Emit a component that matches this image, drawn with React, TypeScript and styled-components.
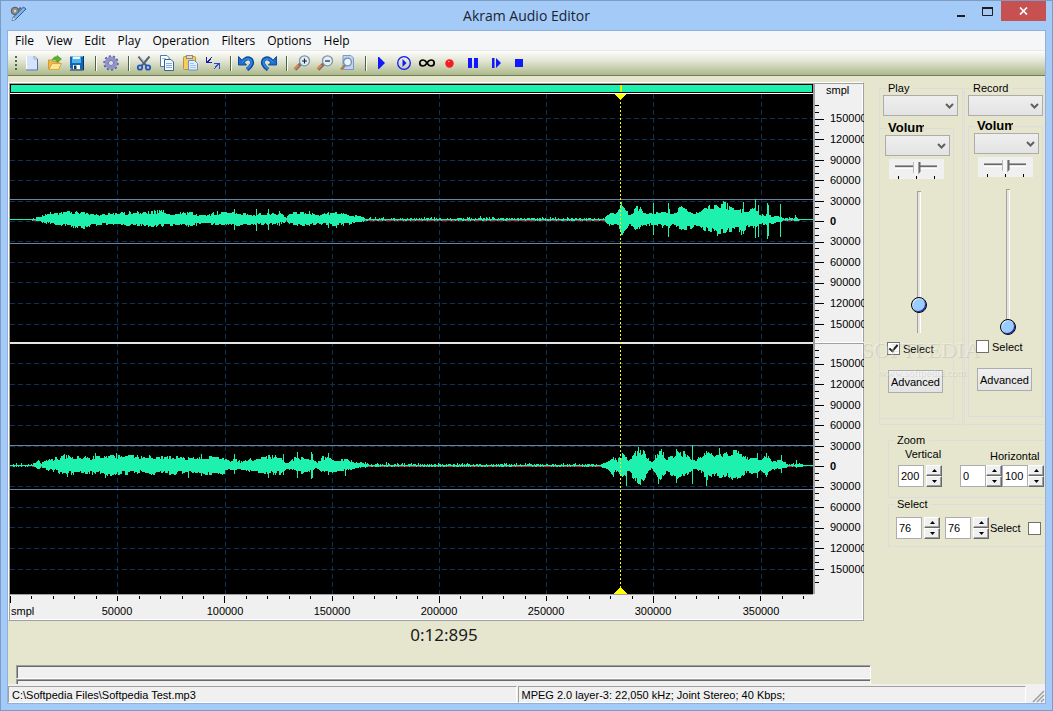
import React from "react";
import styled, { createGlobalStyle, css } from "styled-components";

const GlobalStyle = createGlobalStyle`
  *, *::before, *::after { box-sizing: border-box; }
  body { margin: 0; background: #a4cbf8; }
  button, input, select { font: inherit; color: inherit; }
`;

const c = {
  frame: "#a4cbf8",
  body: "#e6e6cf",
  face: "#f0f0f0",
  grey: "#a0a0a0",
  dark: "#696969",
  wave: "#1ef0ae",
  line: "#dcdcdc",
};

/* ---------- window chrome ---------- */

const Window = styled.div`
  min-height: 100vh;
  display: flex;
  flex-direction: column;
  padding: 0 6px 6px;
  border: 1px solid #7d9cc4;
  background: ${c.frame};
  color: #000;
  font: 11px/12px "Liberation Sans", Arial, sans-serif;
`;

const TitleBar = styled.header`
  display: grid;
  grid-template-columns: 108px 1fr 108px;
  height: 29px;
  align-items: center;
`;

const AppIcon = styled.span`
  display: flex;
  padding: 0 0 4px 3px;
`;

const Title = styled.h1`
  margin: 0;
  text-align: center;
  font: 14px/28px "Open Sans", "Noto Sans", sans-serif;
  color: #1c2430;
`;

const WindowButtons = styled.div`
  display: flex;
  align-self: start;
  justify-content: flex-end;
`;

const WindowButton = styled.button<{ $close?: boolean }>`
  display: flex;
  align-items: center;
  justify-content: center;
  width: ${(p) => (p.$close ? 45 : 27)}px;
  height: 20px;
  padding: 0;
  border: 0;
  background: ${(p) => (p.$close ? "#c75050" : "transparent")};
`;

const Client = styled.div`
  flex: 1;
  display: flex;
  flex-direction: column;
  border: 1px solid #8fb1da;
  background: ${c.body};
`;

const MenuBar = styled.nav`
  display: flex;
  gap: 12px;
  height: 20px;
  padding-left: 7px;
  border-bottom: 1px solid #e8e8ea;
  background: #f5f6f8;
  font: 12px/19px "Open Sans", "Noto Sans", sans-serif;
`;

const MenuItem = styled.button`
  padding: 0;
  border: 0;
  background: none;
`;

const ToolBar = styled.div`
  display: flex;
  align-items: center;
  height: 25px;
  padding-left: 5px;
  border-bottom: 1px solid #6c8058;
  background: linear-gradient(#fdfdfb, #e3e6d5 40%, #adb98a);
`;

const Grip = styled.span`
  width: 7px;
  height: 15px;
  background: repeating-linear-gradient(#4d6b46 0 2px, transparent 2px 4px) 2px 0 / 2px 100% no-repeat;
`;

const ToolButton = styled.button`
  display: flex;
  align-items: center;
  justify-content: center;
  width: 23px;
  height: 22px;
  padding: 0;
  border: 0;
  background: none;
`;

const ToolSeparator = styled.span`
  width: 2px;
  height: 15px;
  margin: 0 2px 0 6px;
  border-left: 1px solid #4a6741;
  border-right: 1px solid #fff;
`;

/* ---------- wave view ---------- */

const Main = styled.main`
  flex: 1;
  display: grid;
  grid-template-columns: minmax(0, 1fr) 181px;
  padding-top: 6px;
`;

const WaveFrame = styled.section`
  display: grid;
  grid-template-columns: minmax(0, 1fr) 49px;
  grid-template-rows: 10px minmax(500px, 1fr) 25px;
  padding: 1px;
  border: 1px solid;
  border-color: #fff ${c.grey} ${c.grey} #fff;
  background: ${c.face};
  box-shadow: inset 1px 1px ${c.grey}, inset -1px -1px #fff;
`;

const Overview = styled.div`
  display: flex;
  margin-bottom: 1px;
  border: 1px solid #000;
  background: ${c.wave};
  box-shadow: 0 1px #fff;
`;

const RulerHead = styled.span`
  padding-left: 11px;
  border-left: 2px solid ${c.grey};
`;

const FillDrawing = styled.svg`
  position: absolute;
  inset: 0;
  width: 100%;
  height: 100%;
`;

const PlotCell = styled.div`
  position: relative;
  background: #000;
`;

const SideRuler = styled.div`
  position: relative;
  overflow: hidden;
  margin-right: -2px;
  border-left: 2px solid ${c.grey};
`;

const BottomRuler = styled.div`
  position: relative;
  border-top: 1px solid ${c.grey};
`;

const Clock = styled.output`
  display: block;
  height: 44px;
  margin-right: 165px;
  text-align: center;
  font: 17px/28px "Noto Sans", "Open Sans", sans-serif;
  color: #1a1a1a;
`;

const Gauges = styled.div`
  height: 19px;
  overflow: hidden;
  display: flex;
  flex-direction: column;
  padding: 0 174px 0 8px;
`;

const Gauge = styled.progress`
  appearance: none;
  flex: none;
  display: block;
  width: 100%;
  height: 14px;
  border: 1px solid;
  border-color: ${c.grey} #fff #fff ${c.grey};
  box-shadow: inset 1px 1px ${c.dark};
  background: ${c.face};
  &::-webkit-progress-bar { background: transparent; }
`;

const StatusBar = styled.footer`
  display: grid;
  grid-template-columns: 1fr 1fr 18px;
  column-gap: 1px;
  height: 19px;
  padding-top: 2px;
  background: ${c.face};
`;

const StatusPanel = styled.div`
  padding: 2px 3px 0;
  white-space: nowrap;
  overflow: hidden;
  border: 1px solid;
  border-color: ${c.grey} #fff #fff ${c.grey};
`;

const SizeGrip = styled.svg`
  align-self: end;
  justify-self: end;
`;

/* ---------- side panel ---------- */

const Side = styled.aside`
  position: relative;
  overflow: hidden;
  padding-left: 15px;
`;

const Mixers = styled.div`
  display: flex;
  gap: 1px;
  width: 180px;
`;

const Group = styled.fieldset`
  min-width: 0;
  margin: 0;
  padding: 0;
  border: 1px solid ${c.line};
`;

const Legend = styled.legend<{ $flush?: boolean }>`
  margin-left: ${(p) => (p.$flush ? 3 : 6)}px;
  padding: 0 4px 0 2px;
`;

const DeviceGroup = styled(Group)<{ $wide?: boolean }>`
  width: ${(p) => (p.$wide ? 95 : 84)}px;
  flex: none;
  padding: 1px 0 5px 3px;
`;

const VolumeGroup = styled(Group)<{ $inset?: boolean }>`
  width: 75px;
  margin: ${(p) => (p.$inset ? "3px 0 0 0" : "5px 0 0 -4px")};
  padding-bottom: 25px;
`;

const VolumeLegend = styled.legend`
  width: 38px;
  margin-left: 6px;
  padding-left: 2px;
  overflow: hidden;
  font: bold 13px/14px "Liberation Sans", Arial, sans-serif;
`;

const ComboBox = styled.div<{ $small?: boolean }>`
  position: relative;
  width: ${(p) => (p.$small ? 65 : 75)}px;
  height: 21px;
  margin-left: ${(p) => (p.$small ? 5 : 0)}px;
`;

const Combo = styled.select`
  appearance: none;
  display: block;
  width: 100%;
  height: 100%;
  border: 1px solid #acacac;
  border-radius: 0;
  background: linear-gradient(#efefef, #e3e3e3);
`;

const ComboArrow = styled.svg`
  position: absolute;
  right: 4px;
  top: 8px;
  pointer-events: none;
`;

const Balance = styled.input`
  appearance: none;
  display: block;
  width: 55px;
  height: 20px;
  margin: 3px 0 0 9px;
  background:
    linear-gradient(#000, #000) 9px 17px / 1px 3px no-repeat,
    linear-gradient(#000, #000) 27px 17px / 1px 3px no-repeat,
    linear-gradient(#000, #000) 45px 17px / 1px 3px no-repeat,
    linear-gradient(#a0a0a0 0 1px, #696969 1px 2px, #e3e3e3 2px 3px, #fff 3px) 6px 6px / 42px 4px no-repeat,
    ${c.face};
  &::-webkit-slider-thumb {
    appearance: none;
    width: 8px;
    height: 14px;
    background: linear-gradient(90deg, #b8b8b8 0 1px, #f6f6f6 1px 5px, #a0a0a0 5px 6px, #696969 6px);
    clip-path: polygon(0 0, 100% 0, 100% 70%, 50% 100%, 0 70%);
  }
`;

const Volume = styled.input`
  appearance: none;
  display: block;
  writing-mode: vertical-lr;
  direction: rtl;
  width: 16px;
  height: 150px;
  margin: 8px 0 0 31px;
  background:
    linear-gradient(#a0a0a0, #a0a0a0) 6px 4px / 4px 1px no-repeat,
    linear-gradient(90deg, #a0a0a0 0 1px, #e6e6e0 1px 3px, #fff 3px) 6px 4px / 4px 142px no-repeat;
  &::-webkit-slider-thumb {
    appearance: none;
    width: 16px;
    height: 16px;
    border: 1px solid #000;
    border-radius: 50%;
    background: #99ccff;
    box-shadow: inset -1px -1px #2222a0, inset 1px 1px #cfe6ff;
  }
`;

const CheckLabel = styled.label<{ $reverse?: boolean }>`
  display: flex;
  flex-direction: ${(p) => (p.$reverse ? "row-reverse" : "row")};
  align-items: center;
  gap: ${(p) => (p.$reverse ? 7 : 3)}px;
`;

const Check = styled.input`
  appearance: none;
  position: relative;
  width: 13px;
  height: 13px;
  margin: 0;
  border: 1px solid #707070;
  background: #fff;
  &:checked::after {
    content: "";
    position: absolute;
    left: 3px;
    top: 0;
    width: 5px;
    height: 9px;
    border: solid #1f1f1f;
    border-width: 0 2px 2px 0;
    transform: rotate(40deg);
  }
`;

const CheckRow = styled.div`
  margin: 5px 0 0 7px;
`;

const PushButton = styled.button`
  display: block;
  width: 55px;
  height: 23px;
  margin: 15px 0 0 8px;
  padding: 0;
  border: 1px solid #acacac;
  background: linear-gradient(#f0f0f0, #e4e4e4);
  white-space: nowrap;
`;

const RangeGroup = styled(Group)<{ $first?: boolean }>`
  display: block;
  width: 170px;
  margin: ${(p) => (p.$first ? 9 : 0)}px 0 0 9px;
  padding-bottom: ${(p) => (p.$first ? 10 : 7)}px;
`;

const FieldRow = styled.div<{ $top?: boolean }>`
  display: flex;
  padding: ${(p) => (p.$top ? "7px 0 0 7px" : "0 0 0 9px")};
`;

const Field = styled.div<{ $gap: number }>`
  margin-right: ${(p) => p.$gap}px;
`;

const FieldLabel = styled.label<{ $indent: number; $low?: boolean }>`
  display: block;
  height: 19px;
  padding: ${(p) => (p.$low ? 4 : 2)}px 0 0 ${(p) => p.$indent}px;
`;

const NumberRow = styled.div<{ $tight?: boolean }>`
  display: flex;
  gap: ${(p) => (p.$tight ? 0 : 2)}px;
`;

const NumberInput = styled.input`
  width: 26px;
  height: 22px;
  padding: 0 2px;
  border: 1px solid #abadb3;
  border-radius: 0;
  background: #fff;
`;

const Spinner = styled.span`
  display: flex;
  flex-direction: column;
  width: 16px;
  height: 22px;
`;

const SpinButton = styled.button`
  display: flex;
  align-items: center;
  justify-content: center;
  width: 16px;
  height: 11px;
  padding: 0;
  border: 1px solid;
  border-color: #fff ${c.dark} ${c.dark} #fff;
  background: ${c.face};
  box-shadow: inset -1px -1px ${c.grey};
`;

const Watermark = styled.div<{ $small?: boolean }>`
  position: absolute;
  pointer-events: none;
  white-space: nowrap;
  ${(p) =>
    p.$small
      ? css`
          left: 14px;
          top: 283px;
          font: 11px/14px "Liberation Serif", serif;
        `
      : css`
          left: -3px;
          top: 256px;
          font: 22px/24px "Liberation Serif", serif;
        `}
  color: rgba(255, 255, 255, 0.3);
  text-shadow: 1px 1px rgba(120, 120, 110, 0.2);
`;

/* ---------- waveform ---------- */

type Point = [x: number, up: number, down: number];

const PLOT_W = 803;
const PLOT_H = 500;

const upperEnvelope: Point[] = [
  [0, 0, 0], [21, 0, 0], [25, 1, 1], [30, 2, 1], [34, 4, 3], [42, 6, 3], [50, 6, 5], [56, 7, 5], [62, 6, 6], [67, 7, 6],
  [75, 6, 7], [82, 6, 5], [88, 4, 4], [100, 5, 4], [112, 6, 4], [124, 6, 5], [136, 6, 5], [148, 7, 6], [158, 6, 5],
  [168, 5, 4], [178, 6, 5], [188, 4, 4], [194, 4, 3], [202, 5, 4], [212, 6, 4], [220, 6, 5], [230, 5, 4], [240, 4, 4],
  [252, 5, 4], [262, 5, 4], [272, 5, 3], [276, 1, 1], [280, 6, 4], [292, 6, 5], [300, 6, 5], [306, 3, 3], [314, 6, 4],
  [324, 6, 5], [334, 5, 4], [340, 3, 3], [348, 3, 2], [355, 1, 1], [594, 1, 1], [598, 5, 5], [605, 5, 5], [608, 8, 6],
  [611, 17, 15], [615, 11, 10], [619, 4, 4], [625, 10, 8], [631, 9, 6], [638, 5, 4], [647, 6, 5], [653, 6, 6], [662, 5, 4],
  [671, 10, 8], [679, 7, 9], [683, 6, 5], [688, 7, 5], [695, 10, 9], [701, 11, 9], [707, 12, 13], [713, 14, 10],
  [720, 11, 10], [726, 8, 8], [733, 9, 9], [738, 7, 6], [745, 9, 8], [749, 4, 3], [757, 4, 4], [761, 3, 3], [770, 2, 2],
  [773, 1, 1], [783, 1, 1], [785, 2, 1], [790, 0, 0], [803, 0, 0],
];

const upperSpikes: Point[] = [
  [67, 7, 8], [144, 9, 6], [178, 6, 7], [207, 8, 5], [224, 10, 10], [246, 10, 11], [258, 10, 10], [269, 8, 6], [299, 8, 6],
  [318, 7, 8], [326, 7, 8], [339, 3, 5], [373, 2, 0], [424, 2, 1], [470, 3, 0], [540, 2, 1], [610, 14, 11], [611, 17, 15],
  [643, 16, 15], [658, 16, 17], [659, 10, 8], [717, 16, 10], [731, 6, 15], [733, 17, 14], [745, 20, 18], [748, 14, 17],
  [757, 16, 19], [758, 14, 16], [770, 15, 17], [785, 4, 1],
];

const lowerEnvelope: Point[] = [
  [0, 0, 0], [22, 1, 0], [25, 2, 1], [28, 4, 3], [31, 1, 1], [34, 4, 3], [42, 6, 4], [50, 7, 6], [56, 8, 7], [64, 7, 7],
  [72, 7, 6], [80, 6, 6], [86, 8, 8], [92, 7, 6], [98, 8, 8], [106, 8, 7], [118, 8, 7], [130, 8, 6], [142, 8, 7],
  [154, 7, 6], [166, 8, 7], [176, 6, 5], [186, 7, 7], [194, 7, 7], [202, 7, 7], [212, 7, 7], [220, 4, 3], [226, 5, 4],
  [230, 3, 3], [238, 5, 5], [246, 6, 5], [254, 8, 6], [262, 8, 7], [270, 7, 7], [276, 2, 2], [284, 6, 4], [290, 7, 6],
  [296, 6, 5], [302, 6, 4], [306, 2, 2], [312, 7, 5], [320, 6, 6], [328, 5, 4], [336, 5, 4], [345, 3, 2], [352, 2, 1],
  [358, 1, 1], [590, 1, 1], [596, 3, 2], [603, 7, 8], [607, 4, 4], [612, 10, 9], [618, 6, 6], [625, 11, 12],
  [630, 14, 15], [635, 10, 9], [641, 2, 2], [645, 8, 8], [651, 13, 12], [656, 6, 5], [661, 8, 8], [667, 12, 10],
  [675, 11, 9], [681, 6, 4], [686, 5, 4], [692, 8, 6], [697, 12, 11], [703, 8, 9], [710, 12, 10], [716, 10, 8],
  [723, 12, 12], [731, 12, 9], [737, 6, 5], [747, 7, 7], [751, 5, 4], [756, 9, 8], [762, 3, 3], [771, 4, 3], [777, 1, 1],
  [784, 1, 1], [787, 2, 1], [795, 0, 0], [803, 0, 0],
];

const lowerSpikes: Point[] = [
  [54, 11, 7], [57, 7, 11], [85, 12, 8], [95, 8, 12], [106, 12, 8], [139, 10, 8], [178, 8, 12], [191, 11, 10],
  [224, 11, 8], [258, 10, 12], [273, 11, 9], [287, 13, 12], [301, 13, 13], [302, 11, 12], [318, 12, 9], [335, 6, 10],
  [355, 3, 2], [376, 3, 1], [428, 2, 1], [616, 8, 20], [628, 18, 18], [630, 15, 19], [648, 10, 18], [651, 16, 13],
  [666, 16, 17], [682, 20, 18], [696, 14, 20], [709, 17, 12], [727, 12, 13], [747, 12, 12], [756, 12, 11],
  [771, 10, 7], [786, 5, 2],
];

/* One vertical stroke per column: the envelope gives the level, a seeded generator the roughness. */
function tracePath(envelope: Point[], spikes: Point[], center: number, seed: number): string {
  let state = seed;
  const random = () => {
    state = (state * 16807) % 2147483647;
    return state / 2147483647;
  };
  const spikeAt = new Map(spikes.map((s) => [s[0], s]));
  let segment = 0;
  let roughUp = 1;
  let roughDown = 1;
  let d = "";
  for (let x = 0; x < PLOT_W; x++) {
    while (segment < envelope.length - 2 && envelope[segment + 1][0] <= x) segment++;
    const [x0, u0, d0] = envelope[segment];
    const [x1, u1, d1] = envelope[segment + 1];
    const t = (x - x0) / (x1 - x0);
    const spike = spikeAt.get(x);
    const level = u0 + (u1 - u0) * t;
    if (random() > 0.35) {
      roughUp = 0.72 + random() * 0.6;
      roughDown = 0.72 + random() * 0.65;
    }
    let up = level * roughUp;
    let down = (d0 + (d1 - d0) * t) * roughDown;
    if (level > 0 && level <= 1) {
      up = random() > 0.94 ? 2 : random() > 0.6 ? 1 : 0;
      down = random() > 0.7 ? 1 : 0;
    }
    if (spike) {
      up = spike[1];
      down = spike[2];
    }
    d += `M${x + 0.5} ${center - Math.round(up)}V${center + 1 + Math.round(down)}`;
  }
  return d;
}

const channels = [
  { center: 126, zero: 127, top: 105, bottom: 149, trace: tracePath(upperEnvelope, upperSpikes, 125, 7321) },
  { center: 372, zero: 372, top: 351, bottom: 395, trace: tracePath(lowerEnvelope, lowerSpikes, 371, 40923) },
];

const steps = [-103, -82, -61, -41, -20, 0, 20, 41, 61, 82, 103];
const stepLabels = [150000, 120000, 90000, 60000, 30000, 0, 30000, 60000, 90000, 120000, 150000];
const gridX = [107, 215, 322, 429, 536, 643, 751];

function Plot() {
  return (
    <PlotCell>
      <FillDrawing viewBox={`0 0 ${PLOT_W} ${PLOT_H}`} preserveAspectRatio="none" shapeRendering="crispEdges" fill="none">
        <g stroke="#0a3055" strokeDasharray="5 3">
          {channels.map((ch) =>
            steps.map((s) => <path key={`${ch.center}${s}`} d={`M0 ${ch.zero + s + 0.5}H${PLOT_W}`} />)
          )}
          {gridX.map((x) => (
            <path key={x} d={`M${x + 0.5} 0V${PLOT_H}`} />
          ))}
        </g>
        {channels.map((ch) => (
          <g key={ch.center}>
            <path stroke="#6f8296" d={`M0 ${ch.top + 0.5}H${PLOT_W}M0 ${ch.bottom + 0.5}H${PLOT_W}`} />
            <path stroke="#c03038" d={`M22 ${ch.center + 0.5}H790`} />
            <path stroke={c.wave} d={ch.trace} />
          </g>
        ))}
        <path stroke="#e9e4e4" strokeWidth="2" d={`M0 249H${PLOT_W}`} />
        <path stroke="#ffff00" strokeDasharray="2 2" d={`M610.500 0V${PLOT_H}`} />
        <path fill="#ffff00" d="M604 0H617L610.500 6ZM604 500H617L610.500 493Z" />
      </FillDrawing>
    </PlotCell>
  );
}

const pctY = (y: number) => `${(y / PLOT_H) * 100}%`;
const pctX = (x: number) => `${(x / PLOT_W) * 100}%`;

function LevelRuler() {
  return (
    <SideRuler>
      <FillDrawing shapeRendering="crispEdges">
        {channels.map((ch) => (
          <g key={ch.zero}>
            {Array.from({ length: 35 }, (_, i) => i - 17).map((n) => {
              const y = pctY(ch.zero + Math.round((n * 41) / 6) + 0.5);
              return <line key={n} x1="0" x2={n % 3 === 0 ? 9 : 4} y1={y} y2={y} stroke="#000" />;
            })}
            {steps.map((s, i) => (
              <text key={s} x="15" y={pctY(ch.zero + s)} dy="4" fontWeight={s === 0 ? 700 : 400}>
                {stepLabels[i]}
              </text>
            ))}
          </g>
        ))}
        <line x1="0" x2="100%" y1={pctY(248.5)} y2={pctY(248.5)} stroke="#fff" />
        <line x1="0" x2="100%" y1={pctY(249.5)} y2={pctY(249.5)} stroke={c.grey} />
      </FillDrawing>
    </SideRuler>
  );
}

function TimeRuler() {
  return (
    <BottomRuler>
      <FillDrawing shapeRendering="crispEdges">
        {Array.from({ length: 38 }, (_, n) => {
          const x = pctX(Math.round(n * 10.72 * 2) + 0.5);
          const length = n % 10 === 0 ? 7 : n % 5 === 0 ? 5 : 3;
          return <line key={n} x1={x} x2={x} y1="1" y2={1 + length} stroke="#000" />;
        })}
        <text x="1" y="20">smpl</text>
        {gridX.map((x, i) => (
          <text key={x} x={pctX(x)} y="20" textAnchor="middle">
            {(i + 1) * 50000}
          </text>
        ))}
      </FillDrawing>
    </BottomRuler>
  );
}

/* ---------- toolbar icons ---------- */

const Icon = ({ children }: { children: React.ReactNode }) => (
  <svg width="18" height="16" viewBox="0 0 18 16" fill="none" aria-hidden="true">
    {children}
  </svg>
);

const magnifier = (
  <>
    <path d="M2 14.500L8 8.500" stroke="#7e6a70" strokeWidth="3.500" />
    <path d="M1.500 14L5.500 10" stroke="#e08a3c" strokeWidth="2.200" />
    <circle cx="11.500" cy="5.800" r="5" fill="#dff0fb" stroke="#8193a8" strokeWidth="1.300" />
  </>
);

const icons: Record<string, React.ReactNode> = {
  New: (
    <>
      <path d="M3 1H11L14 4V15.500H3Z" fill="#d5e4fb" />
      <path d="M3.500 1V15" stroke="#fff" />
      <path d="M3 15H14.500V4L11 1" stroke="#4f6fa4" />
      <path d="M11 1V4H14" fill="#fff" stroke="#8aa6d0" />
    </>
  ),
  Open: (
    <>
      <path d="M2.500 5H6L7 6.500H13V14H2.500Z" fill="#e8bc52" stroke="#cf9a34" />
      <path d="M3 14.500L6 8.500H15.500L12.500 14.500Z" fill="#ffe690" stroke="#d8a540" />
      <path d="M6.500 4Q8.500 1 11 2V0.500L15.500 4L11 7.500V5.500Q8.500 4.500 6.500 5Z" fill="#5cb32c" stroke="#3f8f22" strokeWidth=".6" />
    </>
  ),
  Save: (
    <>
      <path d="M1 1.500H14V14.500H3L1 12.500Z" fill="#1565b0" />
      <path d="M3 1.500H12V8H3Z" fill="#49b6f0" />
      <path d="M4 1.500H11V4H4Z" fill="#e8f6ff" />
      <path d="M4 10H11V14.500H4Z" fill="#fff" />
      <path d="M5 10.500H7.500V14H5Z" fill="#12365c" />
      <path d="M14.500 1V15M1 15H14.500" stroke="#0a3260" />
    </>
  ),
  Settings: (
    <>
      <circle cx="9" cy="8" r="6.600" stroke="#5a5a9c" strokeWidth="2.200" strokeDasharray="2.100 2" />
      <circle cx="9" cy="8" r="4.600" fill="#d6d8ee" stroke="#8f92cc" strokeWidth="3.600" />
      <circle cx="9" cy="8" r="2.600" fill="#dde0d4" stroke="#5c5ea0" strokeWidth=".8" />
    </>
  ),
  Cut: (
    <>
      <path d="M3.500 1.500L11.500 11M14.500 1.500L6.500 11" stroke="#53627a" strokeWidth="2" />
      <path d="M4.500 1.500L9 7" stroke="#c9d2de" strokeWidth=".8" />
      <circle cx="5" cy="12.500" r="2.200" stroke="#2456c0" strokeWidth="1.800" />
      <circle cx="13" cy="12.500" r="2.200" stroke="#2456c0" strokeWidth="1.800" />
    </>
  ),
  Copy: (
    <>
      <path d="M2.500 .500H9L11 2.500V11.500H2.500Z" fill="#fff" stroke="#4a7ab4" />
      <path d="M6.500 4.500H13L15.500 7V15.500H6.500Z" fill="#f2f8ff" stroke="#3a6498" />
      <path d="M8 8.500H14M8 10.500H14M8 12.500H14" stroke="#86aede" />
      <path d="M4 3.500H8" stroke="#9cbce4" />
    </>
  ),
  Paste: (
    <>
      <rect x="2.500" y="1.500" width="12" height="13" rx="1" fill="#f2cf62" stroke="#c09430" />
      <rect x="5.500" y=".500" width="6" height="3" fill="#dcdce0" stroke="#8a8a90" />
      <path d="M7.500 5.500H13.500L16.500 8.500V15H7.500Z" fill="#e2eefb" stroke="#6a8fc0" />
      <path d="M9 8.500H13M9 10.500H15M9 12.500H15" stroke="#a6c2e6" />
    </>
  ),
  Fit: (
    <g shapeRendering="crispEdges">
      <path d="M2 2H3V8H2ZM2 7H8V8H2ZM3 6H4V7H3ZM4 5H5V6H4ZM5 4H6V5H5ZM6 3H7V4H6ZM7 2H8V3H7ZM4 6H5V7H4ZM5 5H6V6H5ZM6 4H7V5H6Z" fill="#1c1cae" />
      <path d="M15 8H16V14H15ZM10 8H16V9H10ZM14 9H15V10H14ZM13 10H14V11H13ZM12 11H13V12H12ZM11 12H12V13H11ZM10 13H11V14H10ZM13 9H14V10H13ZM12 10H13V11H12ZM11 11H12V12H11Z" fill="#2c48d8" />
    </g>
  ),
  Undo: (
    <>
      <path d="M5 7.500Q10 1 14 4.500Q17.500 9 10 14.500" stroke="#114a9c" strokeWidth="4" />
      <path d="M1.500 1.500V10H9.500Z" fill="#1d6fd0" stroke="#114a9c" />
      <path d="M5 7.500Q10 1.500 13.800 5Q16.500 9 10 14" stroke="#2b86e4" strokeWidth="2" />
    </>
  ),
  Redo: (
    <>
      <path d="M13 7.500Q8 1 4 4.500Q.500 9 8 14.500" stroke="#114a9c" strokeWidth="4" />
      <path d="M16.500 1.500V10H8.500Z" fill="#1d6fd0" stroke="#114a9c" />
      <path d="M13 7.500Q8 1.500 4.200 5Q1.500 9 8 14" stroke="#2b86e4" strokeWidth="2" />
    </>
  ),
  "Zoom in": (
    <>
      {magnifier}
      <path d="M9 6H14M11.500 3.500V8.500" stroke="#222" strokeWidth="1.200" />
    </>
  ),
  "Zoom out": (
    <>
      {magnifier}
      <path d="M9 6H14" stroke="#222" strokeWidth="1.200" />
    </>
  ),
  "Zoom page": (
    <>
      <path d="M4 .500H12L14.500 3V14.500H4Z" fill="#c3d2f0" stroke="#7d96c8" />
      <path d="M2 14.500L6 10.500" stroke="#b07848" strokeWidth="2.400" />
      <circle cx="8.500" cy="7" r="3.900" fill="#eaf6ff" stroke="#6f8ab0" strokeWidth="1.300" />
    </>
  ),
  Play: <path d="M6 2H7L13 8L7 14H6Z" fill="#1018ff" />,
  "Play selection": (
    <>
      <circle cx="9" cy="8" r="6.300" stroke="#1018ff" strokeWidth="1.300" />
      <path d="M7.500 4L11.500 8L7.500 12Z" fill="#1018ff" />
    </>
  ),
  Loop: (
    <path
      d="M9 8C7.500 5.500 6.500 5 5 5C3 5 1.800 6.300 1.800 8S3 11 5 11C6.500 11 7.500 10.500 9 8C10.500 5.500 11.500 5 13 5C15 5 16.200 6.300 16.200 8S15 11 13 11C11.500 11 10.500 10.500 9 8Z"
      stroke="#000"
      strokeWidth="1.700"
    />
  ),
  Record: (
    <>
      <circle cx="8.500" cy="8.500" r="4.200" fill="#f41c1c" />
      <path d="M7 6.500H8.500" stroke="#ffb0b0" />
    </>
  ),
  Pause: <path d="M4 3H8V13H4ZM10 3H14V13H10Z" fill="#1018ff" />,
  Step: (
    <>
      <path d="M5 3H7.500V13H5Z" fill="#1018ff" />
      <path d="M9 3L14 8L9 13Z" fill="#1018ff" />
    </>
  ),
  Stop: <path d="M5 4H13V12H5Z" fill="#1018ff" />,
};

const toolGroups = [
  ["New", "Open", "Save"],
  ["Settings"],
  ["Cut", "Copy", "Paste", "Fit"],
  ["Undo", "Redo"],
  ["Zoom in", "Zoom out", "Zoom page"],
  ["Play", "Play selection", "Loop", "Record", "Pause", "Step", "Stop"],
];

/* ---------- side controls ---------- */

function Select({ label, small }: { label: string; small?: boolean }) {
  return (
    <ComboBox $small={small}>
      <Combo aria-label={label} defaultValue="">
        <option value="" />
      </Combo>
      <ComboArrow width="9" height="7" viewBox="0 0 9 7">
        <path d="M1 1L4.500 4.500L8 1" fill="none" stroke="#606060" strokeWidth="2" />
      </ComboArrow>
    </ComboBox>
  );
}

function Mixer({ name, level, selected, inset }: { name: string; level: number; selected?: boolean; inset?: boolean }) {
  return (
    <DeviceGroup $wide={inset}>
      <Legend $flush>{name}</Legend>
      <Select label={`${name} device`} />
      <VolumeGroup $inset={inset}>
        <VolumeLegend>Volume</VolumeLegend>
        <Select label={`${name} line`} small />
        <Balance type="range" aria-label={`${name} balance`} defaultValue={50} />
        <Volume type="range" aria-label={`${name} volume`} defaultValue={level} />
        <CheckRow>
          <CheckLabel>
            <Check type="checkbox" defaultChecked={selected} />
            Select
          </CheckLabel>
        </CheckRow>
        <PushButton type="button">Advanced</PushButton>
      </VolumeGroup>
    </DeviceGroup>
  );
}

function NumberBox({ id, label, value }: { id: string; label?: string; value: string }) {
  return (
    <>
      <NumberInput id={id} aria-label={label} defaultValue={value} />
      <Spinner>
        <SpinButton type="button" aria-label="Increase">
          <svg width="5" height="3" viewBox="0 0 5 3"><path d="M0 3L2.500 0L5 3Z" /></svg>
        </SpinButton>
        <SpinButton type="button" aria-label="Decrease">
          <svg width="5" height="3" viewBox="0 0 5 3"><path d="M0 0L2.500 3L5 0Z" /></svg>
        </SpinButton>
      </Spinner>
    </>
  );
}

const menus = ["File", "View", "Edit", "Play", "Operation", "Filters", "Options", "Help"];

export default function App() {
  return (
    <Window>
      <GlobalStyle />
      <TitleBar>
        <AppIcon>
          <svg width="17" height="16" viewBox="0 0 17 16" fill="none">
            <circle cx="5" cy="5" r="3.800" fill="#8d8d88" stroke="#55585c" />
            <circle cx="5" cy="5" r="1.200" fill="#d8d8d4" />
            <path d="M8 4.500L11 1.500" stroke="#6a6a6a" strokeWidth="2" />
            <path d="M2 14.500L3 11.500L13.500 1L16 3L5.500 13.500Z" fill="#7fb2e6" stroke="#2c5c9c" />
            <path d="M2 14.500L3 11.500L5 13.500Z" fill="#e8e0c8" />
          </svg>
        </AppIcon>
        <Title>Akram Audio Editor</Title>
        <WindowButtons>
          <WindowButton aria-label="Minimize">
            <svg width="10" height="12"><path d="M1 11H9" stroke="#1e1e1e" strokeWidth="2" /></svg>
          </WindowButton>
          <WindowButton aria-label="Maximize">
            <svg width="11" height="9"><path d="M.500 1H10.500V8.500H.500Z" fill="none" stroke="#1e1e1e" /><path d="M0 1H11" stroke="#1e1e1e" strokeWidth="2" /></svg>
          </WindowButton>
          <WindowButton aria-label="Close" $close>
            <svg width="9" height="8"><path d="M1 .500L8 7.500M8 .500L1 7.500" stroke="#fff" strokeWidth="1.700" /></svg>
          </WindowButton>
        </WindowButtons>
      </TitleBar>
      <Client>
        <MenuBar>
          {menus.map((m) => (
            <MenuItem key={m}>{m}</MenuItem>
          ))}
        </MenuBar>
        <ToolBar>
          <Grip />
          {toolGroups.map((group, i) => (
            <React.Fragment key={group[0]}>
              {i > 0 && <ToolSeparator />}
              {group.map((name) => (
                <ToolButton key={name} aria-label={name}>
                  <Icon>{icons[name]}</Icon>
                </ToolButton>
              ))}
            </React.Fragment>
          ))}
        </ToolBar>
        <Main>
          <WaveFrame>
            <Overview>
              <svg width="100%" height="7" viewBox={`0 0 ${PLOT_W - 2} 7`} preserveAspectRatio="none">
                <path d="M609 0H611V7H609Z" fill="#e8f000" />
              </svg>
            </Overview>
            <RulerHead>smpl</RulerHead>
            <Plot />
            <LevelRuler />
            <TimeRuler />
          </WaveFrame>
          <Side>
            <Mixers>
              <Mixer name="Play" level={18} selected />
              <Mixer name="Record" level={0} inset />
            </Mixers>
            <RangeGroup $first>
              <Legend>Zoom</Legend>
              <FieldRow>
                <Field $gap={18}>
                  <FieldLabel htmlFor="zoom-v" $indent={7}>Vertical</FieldLabel>
                  <NumberRow>
                    <NumberBox id="zoom-v" value="200" />
                  </NumberRow>
                </Field>
                <Field $gap={0}>
                  <FieldLabel htmlFor="zoom-from" $indent={30} $low>Horizontal</FieldLabel>
                  <NumberRow $tight>
                    <NumberBox id="zoom-from" value="0" />
                    <NumberBox id="zoom-to" label="Horizontal end" value="100" />
                  </NumberRow>
                </Field>
              </FieldRow>
            </RangeGroup>
            <RangeGroup>
              <Legend>Select</Legend>
              <FieldRow $top>
                <Field $gap={5}>
                  <NumberRow><NumberBox id="sel-from" label="Selection start" value="76" /></NumberRow>
                </Field>
                <Field $gap={1}>
                  <NumberRow><NumberBox id="sel-to" label="Selection end" value="76" /></NumberRow>
                </Field>
                <CheckLabel $reverse>
                  <Check type="checkbox" />
                  Select
                </CheckLabel>
              </FieldRow>
            </RangeGroup>
            <Watermark>SOFTPEDIA</Watermark>
            <Watermark $small>www.softpedia.com</Watermark>
          </Side>
        </Main>
        <Clock>0:12:895</Clock>
        <Gauges>
          <Gauge aria-label="Position" value={0} />
          <Gauge aria-label="Progress" value={0} />
        </Gauges>
        <StatusBar>
          <StatusPanel>C:\Softpedia Files\Softpedia Test.mp3</StatusPanel>
          <StatusPanel>MPEG 2.0 layer-3: 22,050 kHz; Joint Stereo; 40 Kbps;</StatusPanel>
          <SizeGrip width="13" height="13" viewBox="0 0 13 13">
            <path d="M1 12L12 1M5 12L12 5M9 12L12 9" stroke="#a0a0a0" strokeWidth="1.500" />
          </SizeGrip>
        </StatusBar>
      </Client>
    </Window>
  );
}
